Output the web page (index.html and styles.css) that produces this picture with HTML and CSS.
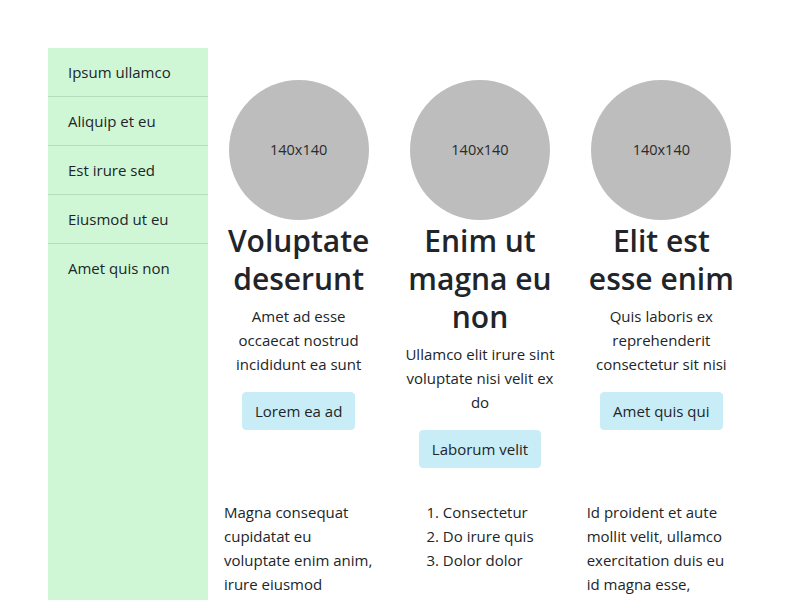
FILE: index.html
```html
<!DOCTYPE html>
<html lang="la">
<head>
<meta charset="utf-8">
<title>Layout</title>
<link rel="stylesheet" href="styles.css">
</head>
<body>
<div class="page">
  <nav class="sidebar">
    <a class="nav-item" href="#">Ipsum ullamco</a>
    <a class="nav-item" href="#">Aliquip et eu</a>
    <a class="nav-item" href="#">Est irure sed</a>
    <a class="nav-item" href="#">Eiusmod ut eu</a>
    <a class="nav-item" href="#">Amet quis non</a>
  </nav>
  <main class="main">
    <div class="row features">
      <div class="col">
        <div class="avatar">140x140</div>
        <h2 class="title">Voluptate deserunt</h2>
        <p class="text">Amet ad esse occaecat nostrud incididunt ea sunt</p>
        <a class="btn" href="#">Lorem ea ad</a>
      </div>
      <div class="col">
        <div class="avatar">140x140</div>
        <h2 class="title">Enim ut magna eu non</h2>
        <p class="text">Ullamco elit irure sint voluptate nisi velit ex do</p>
        <a class="btn" href="#">Laborum velit</a>
      </div>
      <div class="col">
        <div class="avatar">140x140</div>
        <h2 class="title">Elit est esse enim</h2>
        <p class="text">Quis laboris ex reprehenderit consectetur sit nisi</p>
        <a class="btn" href="#">Amet quis qui</a>
      </div>
    </div>
    <div class="row details">
      <div class="col left">
        <p class="text">Magna consequat cupidatat eu voluptate enim anim, irure eiusmod</p>
      </div>
      <div class="col">
        <ol class="list">
          <li>Consectetur</li>
          <li>Do irure quis</li>
          <li>Dolor dolor</li>
        </ol>
      </div>
      <div class="col left">
        <p class="text narrow">Id proident et aute mollit velit, ullamco exercitation duis eu id magna esse, culpa</p>
      </div>
    </div>
  </main>
</div>
</body>
</html>
```

FILE: styles.css
```css
* { box-sizing: border-box; }

body {
  margin: 0;
  font-family: "Open Sans", "Noto Sans", sans-serif;
  font-size: 15px;
  line-height: 24px;
  color: #212529;
  background: #ffffff;
}

.page {
  display: flex;
  padding: 48px 48px 0;
  min-height: 100vh;
}

.sidebar {
  width: 160px;
  flex: 0 0 160px;
  background: #cff7d6;
  display: flex;
  flex-direction: column;
}

.nav-item {
  display: block;
  padding: 12px 20px;
  color: #212529;
  text-decoration: none;
  border-bottom: 1px solid #b4dcbf;
}

.nav-item:last-child { border-bottom: none; }

.main {
  flex: 1;
  padding-top: 32px;
}

.row {
  display: grid;
  grid-template-columns: repeat(3, 1fr);
  align-items: start;
}

.details { margin-top: 32px; }

.col {
  padding: 0 16px;
  text-align: center;
}

.col.left { text-align: left; }

.avatar {
  width: 140px;
  height: 140px;
  margin: 0 auto;
  border-radius: 50%;
  background: #bdbdbd;
  display: flex;
  align-items: center;
  justify-content: center;
  font-size: 14.5px;
  color: #2b2b2b;
}

.title {
  margin: 0 0 6px;
  padding-top: 2px;
  font-size: 30px;
  line-height: 38px;
  font-weight: 600;
  color: #212529;
}

.text {
  margin: 0 0 16px;
}

.text.narrow { max-width: 140px; }

.btn {
  display: inline-block;
  padding: 6px 12px;
  border: 1px solid #c9edf7;
  border-radius: 4px;
  background: #c9edf7;
  color: #212529;
  text-decoration: none;
}

.list {
  margin: 0 auto;
  padding: 0;
  width: fit-content;
  text-align: left;
  list-style-position: inside;
}
```
